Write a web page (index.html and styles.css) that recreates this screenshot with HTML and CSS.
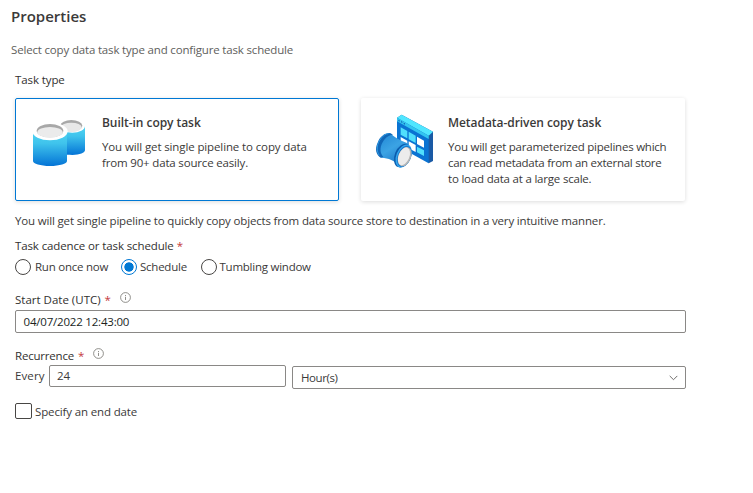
FILE: index.html
```html
<!DOCTYPE html>
<html lang="en">
<head>
<meta charset="utf-8">
<title>Properties</title>
<link rel="stylesheet" href="styles.css">
</head>
<body>
<main class="page">
  <h1 class="title"><span>Properties</span></h1>
  <p class="subtitle">Select copy data task type and configure task schedule</p>
  <div class="form">
    <div class="label type-label">Task type</div>
    <div class="cards">
      <section class="card selected">
        <svg class="art" viewBox="-9 -12 216 198" aria-hidden="true">
          <defs>
            <linearGradient id="tank" x1="0" y1="0" x2="0" y2="1">
              <stop offset="0" stop-color="#50d5f3"/><stop offset=".35" stop-color="#3fc3ec"/><stop offset="1" stop-color="#0474d6"/>
            </linearGradient>
          </defs>
          <path d="M104 42V118C104 124 120 129 142 129S180 122 180 115V42Z" fill="url(#tank)"/>
          <ellipse cx="142" cy="42" rx="38" ry="20" fill="#fff"/>
          <ellipse cx="139" cy="41" rx="33" ry="17" fill="#a8a8a8"/>
          <ellipse cx="139" cy="46" rx="31" ry="14" fill="#e8e8e8"/>
          <path d="M24 58V147C24 155 46 162 75 162S126 155 126 147V58Z" fill="url(#tank)"/>
          <ellipse cx="75" cy="58" rx="53" ry="27" fill="#fff"/>
          <ellipse cx="75" cy="56" rx="40" ry="20" fill="#a8a8a8"/>
          <ellipse cx="75" cy="61" rx="38" ry="16" fill="#ebebeb"/>
        </svg>
        <div class="card-text">
          <h2 class="t-built">Built-in copy task</h2>
          <p><span class="b1">You will get single pipeline to copy data</span><br><span class="b2">from 90+ data source easily.</span></p>
        </div>
      </section>
      <section class="card">
        <svg class="art" viewBox="0 0 216 198" aria-hidden="true">
          <defs>
            <linearGradient id="tube" x1=".2" y1="0" x2=".8" y2="1">
              <stop offset="0" stop-color="#2389d6"/><stop offset=".45" stop-color="#3ba3e4"/><stop offset="1" stop-color="#1670c4"/>
            </linearGradient>
          </defs>
          <path d="M87 29 101 20 195 71V159L182 166Z" fill="#1a5aa5"/>
          <path d="M87 29 182 83V166L87 113Z" fill="#0a73d2"/>
          <path d="M87 29 101 20 195 71 182 83Z" fill="#50e6ff"/>
          <path d="M87 29 182 83V93L87 40Z" fill="#32c5f0"/>
          <path d="M91 35l4 2v4l-4-2zM99 39l4 2v4l-4-2zM107 44l4 2v4l-4-2z" fill="#1466b5"/>
          <path d="M98 58 118 69V91L98 80ZM122 71 143 83V105L122 94ZM147 116 168 127V144L147 133Z" fill="#50dffc"/>
          <path d="M147 86 168 98V119L147 108ZM98 87 118 98V120L98 109ZM122 100 143 111V132L122 121Z" fill="#fff"/>
          <path d="M66 75C80 88 92 95 122 107L92 172C80 158 62 150 40 149C26 136 28 118 38 98 46 82 56 76 66 75Z" fill="url(#tube)"/>
          <path d="M75 80C61 70 38 79 29 104 20 123 24 139 38 149L46 147C33 132 36 113 48 96 57 84 67 80 75 80Z" fill="#1066b7"/>
          <path d="M61 77C47 77 29 99 28 117 27 130 30 137 34 142" fill="none" stroke="#2e9be5" stroke-width="3"/>
          <ellipse cx="104" cy="143" rx="24" ry="37" transform="rotate(22 104 143)" fill="#0b5cad"/>
          <ellipse cx="107" cy="144" rx="22" ry="36" transform="rotate(22 107 144)" fill="#32a5ed"/>
          <ellipse cx="109" cy="145" rx="20" ry="33" transform="rotate(22 109 145)" fill="#1877cb"/>
          <ellipse cx="110" cy="146" rx="19" ry="30" transform="rotate(22 110 146)" fill="#b5b5b5"/>
          <ellipse cx="108" cy="145" rx="16" ry="28" transform="rotate(22 108 145)" fill="#ececec"/>
        </svg>
        <div class="card-text">
          <h2 class="t-meta">Metadata-driven copy task</h2>
          <p><span class="m1">You will get parameterized pipelines which</span><br><span class="m2">can read metadata from an external store</span><br><span class="m3">to load data at a large scale.</span></p>
        </div>
      </section>
    </div>
    <p class="explain">You will get single pipeline to quickly copy objects from data source store to destination in a very intuitive manner.</p>
    <div class="label cadence"><span>Task cadence or task schedule</span><b class="req">*</b></div>
    <div class="radios">
      <div class="radio r1"><i></i><span>Run once now</span></div>
      <div class="radio r2 on"><i></i><span>Schedule</span></div>
      <div class="radio r3"><i></i><span>Tumbling window</span></div>
    </div>
    <div class="label start"><span>Start Date (UTC)</span><b class="req">*</b>
      <svg class="info" viewBox="0 0 11 11"><circle cx="5.5" cy="5.5" r="4.9"/><path d="M5.5 4.8V8M5.5 3V4"/></svg></div>
    <div class="field date"><span>04/07/2022 12:43:00</span></div>
    <div class="label recur"><span>Recurrence</span><b class="req">*</b>
      <svg class="info" viewBox="0 0 11 11"><circle cx="5.5" cy="5.5" r="4.9"/><path d="M5.5 4.8V8M5.5 3V4"/></svg></div>
    <div class="every">
      <span class="every-label">Every</span>
      <div class="field count"><span>24</span></div>
      <div class="field unit"><span>Hour(s)</span>
        <svg class="chev" viewBox="0 0 9 6"><path d="M.7.9 4.5 4.7 8.3.9"/></svg></div>
    </div>
    <div class="end"><i></i><span>Specify an end date</span></div>
  </div>
</main>
</body>
</html>
```
FILE: styles.css
```css
* { box-sizing: border-box; margin: 0; padding: 0; }
body {
  background: #fff;
  color: #3b3a39;
  font: 11.5px/16px "Open Sans", "Noto Sans", sans-serif;
  letter-spacing: -.17px;
  white-space: nowrap;
}
.page { width: 753px; height: 493px; padding: 6px 0 0 11px; overflow: hidden; }
.title { font-size: 15px; line-height: 20px; font-weight: 600; letter-spacing: 0; }
.subtitle { margin-top: 16px; color: #605e5c; }
.form { width: 675px; padding-left: 4px; }
.label { display: flex; color: #323130; font-weight: 500; letter-spacing: -.1px; }
.type-label { margin-top: 14px; }
.cards { display: flex; gap: 22px; margin-top: 10px; }
.card {
  display: flex;
  width: 324px;
  height: 103px;
  padding: 10px 0 0 7px;
  border-radius: 2px;
  box-shadow: 0 1px 4px rgba(0, 0, 0, .14);
}
.card.selected { padding: 9px 0 0 6px; border: 1px solid #0078d4; }
.art { width: 72px; height: 66px; flex: none; }
.card-text { padding: 7px 0 0 8px; }
.card h2 { font-size: 12px; line-height: 16px; font-weight: 600; letter-spacing: -.05px; }
.card p { margin-top: 8px; }
.b1 { letter-spacing: -.12px; }
.m1 { letter-spacing: -.23px; }
.m2 { letter-spacing: -.27px; }
.m3 { letter-spacing: -.2px; }
.explain { margin-top: 12px; letter-spacing: -.165px; }
.cadence { margin-top: 9px; letter-spacing: -.12px; }
.req { margin-left: 4px; color: #c4383c; font-weight: 400; }
.cadence .req { margin-left: 3px; }
.radios { display: flex; align-items: center; height: 16px; margin-top: 5px; letter-spacing: -.24px; }
.radio { display: flex; align-items: center; }
.radio i {
  width: 16px; height: 16px; margin-right: 4px;
  border: 1px solid #484644; border-radius: 50%;
}
.radio.on i { border-color: #0078d4; background: radial-gradient(circle, #0078d4 4.3px, #fff 5px); }
.r1 { width: 106px; }
.r2 { width: 79.5px; }
.r2 i, .r3 i { margin-right: 3px; }
.start { margin-top: 17px; letter-spacing: 0; }
.recur { margin-top: 15px; letter-spacing: -.2px; }
.info { width: 11px; height: 11px; margin-left: 9px; fill: none; stroke: #75736f; stroke-width: .8; }
.field {
  display: flex; align-items: center;
  height: 23px; padding-left: 8px;
  border: 1px solid #8a8886; border-radius: 2px;
}
.date { width: 671px; margin-top: 2px; padding-left: 7.5px; color: #201f1e; letter-spacing: -.2px; }
.every { display: flex; align-items: flex-start; margin-top: 1px; letter-spacing: -.1px; }
.every-label { width: 34px; margin-top: 3px; letter-spacing: .1px; }
.count { width: 237px; height: 22px; padding-left: 7px; }
.unit { width: 394px; margin: 1px 0 0 6px; justify-content: space-between; padding-right: 7px; letter-spacing: -.4px; }
.chev { width: 9px; height: 6px; fill: none; stroke: #605e5c; stroke-width: .9; }
.end { display: flex; align-items: flex-start; margin-top: 14px; letter-spacing: -.14px; }
.end span { padding-top: 1px; }
.end i { width: 17px; height: 16px; margin-right: 3px; border: 1px solid #484644; border-radius: 2px; }
```
